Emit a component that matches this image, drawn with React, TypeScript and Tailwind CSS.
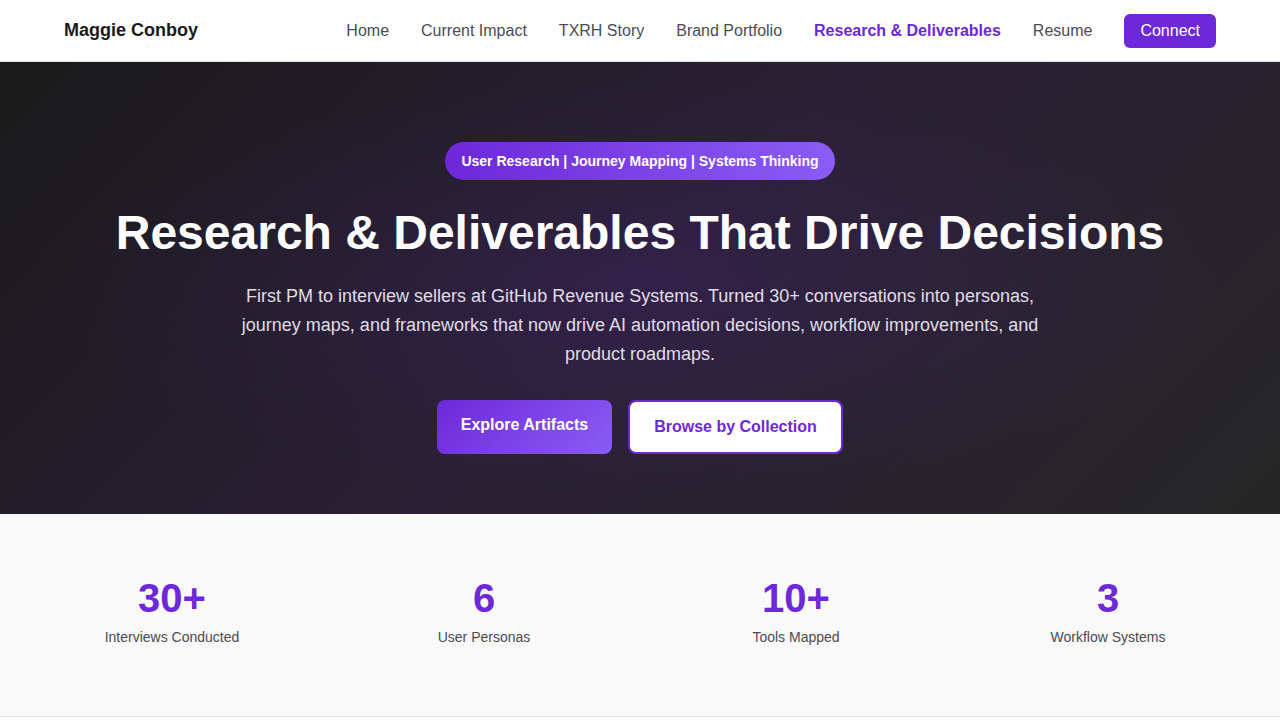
import React from "react";

export default function App() {
  const links = ["Home", "Current Impact", "TXRH Story", "Brand Portfolio"];
  const stats = [
    ["30+", "Interviews Conducted"],
    ["6", "User Personas"],
    ["10+", "Tools Mapped"],
    ["3", "Workflow Systems"],
  ];
  return (
    <div className="min-h-screen bg-white font-['Liberation_Sans',Arial,sans-serif]">
      <nav className="h-[62px] border-b border-[#e5e5e5] bg-white">
        <div className="flex h-full items-center justify-between px-16">
          <div className="text-[18px] font-bold text-[#1a1a1a]">Maggie Conboy</div>
          <div className="flex items-center gap-8 text-[16px]">
            {links.map((l) => (
              <span key={l} className="text-[#4b4b55]">{l}</span>
            ))}
            <span className="font-bold text-[#6d28d9]">Research &amp; Deliverables</span>
            <span className="text-[#4b4b55]">Resume</span>
            <span className="rounded-md bg-[#6d28d9] px-[16px] py-[5px] text-white">Connect</span>
          </div>
        </div>
      </nav>
      <section className="relative h-[452px] overflow-hidden bg-[linear-gradient(135deg,#1a1a1a_0%,#2a2035_50%,#262626_100%)]">
        <div className="absolute inset-0 bg-[radial-gradient(ellipse_at_center,rgba(109,40,217,0.12),transparent_65%)]" />
        <div className="relative flex flex-col items-center pt-[80px] text-center">
          <div className="rounded-full bg-[linear-gradient(90deg,#6d28d9,#8b5cf6)] px-4 py-[10px] text-[14px] font-bold leading-[18px] text-white">
            User Research | Journey Mapping | Systems Thinking
          </div>
          <h1 className="mt-[22px] text-[48px] font-bold leading-[62px] text-white">
            Research &amp; Deliverables That Drive Decisions
          </h1>
          <p className="mt-[18px] max-w-[800px] text-[18px] leading-[29px] text-[#e0dde6]">
            First PM to interview sellers at GitHub Revenue Systems. Turned 30+ conversations into personas, journey maps, and frameworks that now drive AI automation decisions, workflow improvements, and product roadmaps.
          </p>
          <div className="mt-[31px] flex gap-4">
            <div className="flex h-[54px] w-[175px] items-start justify-center rounded-lg bg-[linear-gradient(135deg,#6d28d9,#8b5cf6)] pt-[13px] text-[16px] font-bold text-white">
              Explore Artifacts
            </div>
            <div className="flex h-[54px] w-[215px] items-center justify-center rounded-lg border-2 border-[#6d28d9] bg-white text-[16px] font-bold text-[#6d28d9]">
              Browse by Collection
            </div>
          </div>
        </div>
      </section>
      <section className="h-[203px] border-b border-[#e2e0ea] bg-[#f9f9f9]">
        <div className="grid grid-cols-4 px-4 pt-[61px]">
          {stats.map(([n, l]) => (
            <div key={l} className="flex flex-col items-center">
              <div className="text-[40px] font-bold leading-[46px] text-[#6d28d9]">{n}</div>
              <div className="mt-[6px] text-[14px] text-[#4b4b55]">{l}</div>
            </div>
          ))}
        </div>
      </section>
    </div>
  );
}
